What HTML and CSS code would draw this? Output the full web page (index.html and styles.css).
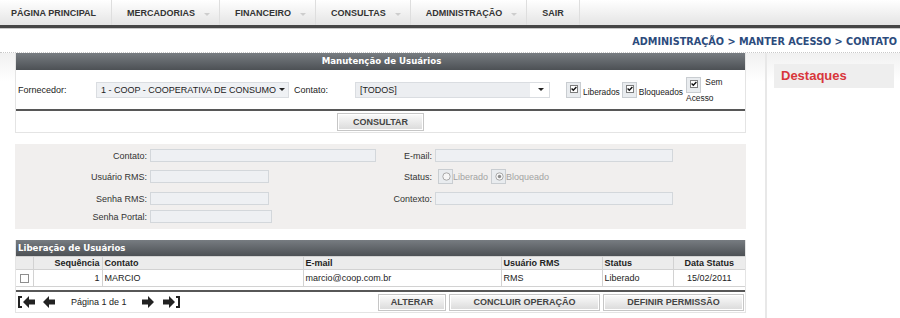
FILE: index.html
```html
<!DOCTYPE html>
<html lang="pt-BR">
<head>
  <meta charset="UTF-8">
  <title>Manter Acesso - Contato</title>
  <link rel="stylesheet" href="styles.css">
</head>
<body>

<!-- Menu -->
<nav class="menu">
  <ul>
    <li class="first">PÁGINA PRINCIPAL</li>
    <li>MERCADORIAS<span class="drop"></span></li>
    <li>FINANCEIRO<span class="drop"></span></li>
    <li>CONSULTAS<span class="drop"></span></li>
    <li>ADMINISTRAÇÃO<span class="drop"></span></li>
    <li class="last">SAIR</li>
  </ul>
</nav>

<div class="crumbs">ADMINISTRAÇÃO &gt; MANTER ACESSO &gt; CONTATO</div>

<div class="page">
  <main class="content">

    <!-- Filtro -->
    <section class="box">
      <h2 class="box-title center">Manutenção de Usuários</h2>
      <div class="filter-row">
        <span class="lbl-forn">Fornecedor:</span>
        <div class="select sel-forn">1 - COOP - COOPERATIVA DE CONSUMO<span class="arrow"></span></div>
        <span class="lbl-cont">Contato:</span>
        <div class="select sel-cont">[TODOS]<span class="arrow"></span></div>
        <div class="checks">
          <label class="check"><span class="cbox"><span class="tick"><svg width="6" height="6" viewBox="0 0 6 6"><path d="M0.6 2.6 L2.3 4.3 L5.4 1" fill="none" stroke="#111" stroke-width="1.4"/></svg></span></span>Liberados</label>
          <label class="check"><span class="cbox"><span class="tick"><svg width="6" height="6" viewBox="0 0 6 6"><path d="M0.6 2.6 L2.3 4.3 L5.4 1" fill="none" stroke="#111" stroke-width="1.4"/></svg></span></span>Bloqueados</label>
          <label class="check-wrap"><span class="cbox"><span class="tick"><svg width="6" height="6" viewBox="0 0 6 6"><path d="M0.6 2.6 L2.3 4.3 L5.4 1" fill="none" stroke="#111" stroke-width="1.4"/></svg></span></span> Sem Acesso</label>
        </div>
      </div>
      <div class="actions">
        <button class="btn btn-consultar">CONSULTAR</button>
      </div>
    </section>

    <!-- Dados do contato -->
    <section class="details">
      <span class="lbl">Contato:</span>
      <span class="field"></span>
      <span class="lbl">E-mail:</span>
      <span class="field"></span>

      <span class="lbl">Usuário RMS:</span>
      <span class="field w119"></span>
      <span class="lbl">Status:</span>
      <div class="radios">
        <span class="rbox"><svg width="9" height="9" viewBox="0 0 9 9"><circle cx="4.5" cy="4.5" r="3.7" fill="#f6f6f6" stroke="#a9a9a9"/></svg></span>Liberado
        <span class="rbox"><svg width="9" height="9" viewBox="0 0 9 9"><circle cx="4.5" cy="4.5" r="3.7" fill="#f6f6f6" stroke="#a9a9a9"/><circle cx="4.5" cy="4.5" r="1.7" fill="#8c8c8c"/></svg></span>Bloqueado
      </div>

      <span class="lbl">Senha RMS:</span>
      <span class="field w119"></span>
      <span class="lbl">Contexto:</span>
      <span class="field"></span>

      <span class="lbl">Senha Portal:</span>
      <span class="field w122"></span>
    </section>

    <!-- Lista -->
    <section class="box list">
      <h2 class="box-title">Liberação de Usuários</h2>
      <table class="grid">
        <colgroup>
          <col style="width:17px">
          <col style="width:69px">
          <col style="width:201px">
          <col style="width:198px">
          <col style="width:101px">
          <col style="width:71px">
          <col>
        </colgroup>
        <tr>
          <th></th>
          <th class="right">Sequência</th>
          <th>Contato</th>
          <th>E-mail</th>
          <th>Usuário RMS</th>
          <th>Status</th>
          <th class="center">Data Status</th>
        </tr>
        <tr>
          <td class="center"><span class="cb"></span></td>
          <td class="right">1</td>
          <td>MARCIO</td>
          <td>marcio@coop.com.br</td>
          <td>RMS</td>
          <td>Liberado</td>
          <td class="center">15/02/2011</td>
        </tr>
      </table>
      <div class="pager-row">
        <div class="pager">
          <svg class="ico-first" width="18" height="12" viewBox="0 0 18 12"><path d="M0 0h4v2H2v8h2v2H0z" fill="#222"/><path d="M5 6l6-6v3.5h6v5h-6V12z" fill="#222"/></svg>
          <svg class="ico-prev" width="12" height="12" viewBox="0 0 12 12"><path d="M0 6l6-6v3.5h6v5H6V12z" fill="#222"/></svg>
          <span class="pages">Página 1 de 1</span>
          <svg class="ico-next" width="12" height="12" viewBox="0 0 12 12"><path d="M12 6L6 0v3.5H0v5h6V12z" fill="#222"/></svg>
          <svg class="ico-last" width="18" height="12" viewBox="0 0 18 12"><path d="M13 6L7 0v3.5H1v5h6V12z" fill="#222"/><path d="M14 0h4v12h-4v-2h2V2h-2z" fill="#222"/></svg>
        </div>
        <div class="buttons">
          <button class="btn btn-alterar">ALTERAR</button>
          <button class="btn btn-concluir">CONCLUIR OPERAÇÃO</button>
          <button class="btn btn-definir">DEFINIR PERMISSÃO</button>
        </div>
      </div>
    </section>

  </main>

  <aside class="side">
    <h3>Destaques</h3>
  </aside>
</div>

</body>
</html>
```

FILE: styles.css
```css
* {
  box-sizing: border-box;
}

html, body {
  margin: 0;
  padding: 0;
  background: #fff;
  color: #333;
  font-family: "Liberation Sans", Arial, sans-serif;
  font-size: 9px;
}

/* Menu */
.menu {
  height: 28px;
  background: linear-gradient(#ffffff, #e4e4e4);
  border-bottom: 3px solid #454545;
  box-shadow: 0 1px 0 #c8c8c8;
}

.menu ul {
  list-style: none;
  margin: 0;
  padding: 0;
  display: flex;
  height: 25px;
}

.menu li {
  display: flex;
  align-items: center;
  padding: 0 9px 0 15px;
  border-right: 1px solid #dedede;
  font-weight: bold;
  color: #333;
}

.menu li.first {
  padding: 0 15px 0 11px;
}

.menu li.last {
  padding-right: 15px;
}

.menu .drop {
  width: 0;
  height: 0;
  margin: 4px 0 0 9px;
  border-left: 3px solid transparent;
  border-right: 3px solid transparent;
  border-top: 3px solid #cdcdcd;
}

.crumbs {
  height: 24px;
  padding: 2px 3px 0 0;
  text-align: right;
  font: bold 9.7px "DejaVu Sans", Verdana, sans-serif;
  line-height: 24px;
  color: #2c4b7c;
}

/* Page */
.page {
  display: flex;
  border-top: 1px dotted #c9c9c9;
  background: linear-gradient(#f1f1f1, #fff 28px) no-repeat;
  min-height: 266px;
}

.content {
  width: 765px;
  padding: 0 19px 0 15px;
}

.side {
  flex: 1;
  border-left: 2px solid #e8e8e8;
  padding: 11px 6px 0 7px;
}

.side h3 {
  margin: 0;
  height: 24px;
  line-height: 24px;
  padding-left: 7px;
  background: #eeeeee;
  color: #d8363b;
  font-size: 13px;
}

/* Boxes */
.box {
  background: #fff;
  border: 1px solid #e4e4e4;
  border-top: 0;
}

.box-title {
  margin: 0;
  height: 17px;
  padding-left: 2px;
  background: linear-gradient(#777c81, #4d5155);
  color: #fff;
  font: bold 8.6px "DejaVu Sans", Verdana, sans-serif;
  line-height: 17px;
}

.center {
  text-align: center;
}

.right {
  text-align: right;
}

.filter-row {
  height: 41px;
  display: flex;
  align-items: center;
  padding-left: 2px;
  border-bottom: 2px solid #575757;
  color: #222;
}

.lbl-forn {
  width: 78px;
}

.lbl-cont {
  width: 61px;
  margin-left: 5px;
}

.select {
  height: 16px;
  display: flex;
  align-items: center;
  justify-content: space-between;
  padding: 0 3px 0 4px;
  background: #eff1f4;
  border: 1px solid #dadde1;
  color: #222;
}

.sel-forn {
  width: 193px;
}

.sel-cont {
  width: 195px;
  padding-right: 5px;
  background: linear-gradient(90deg, #eceef1 90%, #fff 90%);
}

.select .arrow {
  width: 0;
  height: 0;
  border-left: 3px solid transparent;
  border-right: 3px solid transparent;
  border-top: 3px solid #222;
}

.checks {
  display: flex;
  align-items: center;
  margin-left: 16px;
  font-size: 8.4px;
}

.check {
  display: inline-flex;
  align-items: flex-end;
  line-height: 11px;
  margin-right: 2px;
}

.check-wrap {
  display: inline-block;
  width: 38px;
  line-height: 10px;
  margin-left: 1px;
}

.cbox {
  display: inline-block;
  width: 15px;
  height: 16px;
  padding: 2px 0 0 3px;
  margin-right: 2px;
  background: #e9ecef;
  border: 1px solid #c9cdd1;
  vertical-align: top;
}

.tick {
  display: flex;
  align-items: center;
  justify-content: center;
  width: 8px;
  height: 8px;
  background: #fff;
  border: 1px solid #7d7d7d;
}

.actions {
  height: 21px;
  display: flex;
  align-items: center;
  justify-content: center;
}

.btn {
  height: 18px;
  padding: 0;
  border: 1px solid #c6c6c6;
  background: linear-gradient(#fbfbfb, #dadada);
  box-shadow: inset 0 0 0 1px #fff;
  font: bold 9px "Liberation Sans", Arial, sans-serif;
  color: #444;
}

.btn-consultar {
  width: 87px;
}

/* Details */
.details {
  margin-top: 11px;
  height: 85px;
  padding-top: 2px;
  background: #f1efee;
  display: grid;
  grid-template-columns: 132px 226px 53px 238px;
  grid-template-rows: 19px 23px 21px 15px;
  column-gap: 3px;
  align-items: center;
}

.lbl {
  text-align: right;
  color: #333;
}

.field {
  height: 13px;
  background: #eef0f3;
  border: 1px solid #d3d7db;
}

.w119 {
  width: 119px;
}

.w122 {
  width: 122px;
}

.radios {
  display: flex;
  align-items: center;
  color: #a3a3a3;
}

.rbox {
  display: inline-block;
  width: 15px;
  height: 15px;
  padding: 2px 0 0 3px;
  margin-left: 3px;
  background: #e9ecef;
  border: 1px solid #c9cdd1;
}

/* List */
.list {
  margin-top: 11px;
}

.list .box-title {
  height: 16px;
  line-height: 16px;
}

.grid {
  width: 100%;
  border-collapse: collapse;
  table-layout: fixed;
}

.grid th, .grid td {
  border: 1px solid #d2d2d2;
  padding: 0 2px;
  text-align: left;
  white-space: nowrap;
  color: #222;
}

.grid th {
  height: 13px;
  background: #ececec;
  font-weight: bold;
}

.grid td {
  height: 17px;
}

.grid th.right, .grid td.right {
  text-align: right;
}

.grid th.center, .grid td.center {
  text-align: center;
}

.grid tr > :first-child {
  border-left: 0;
}

.grid tr > :last-child {
  border-right: 0;
}

.cb {
  display: inline-block;
  width: 9px;
  height: 9px;
  margin-top: 2px;
  background: #fff;
  border: 1px solid #8e8e8e;
}

.pager-row {
  margin-top: 3px;
  height: 22px;
  display: flex;
  align-items: center;
  justify-content: space-between;
  padding: 0 1px 0 2px;
  border-top: 2px solid #575757;
}

.pager {
  display: flex;
  align-items: center;
}

.ico-prev {
  margin-left: 7px;
}

.pages {
  margin: 0 15px 0 16px;
  color: #222;
}

.ico-last {
  margin-left: 8px;
}

.buttons {
  display: flex;
  gap: 3px;
}

.buttons .btn {
  height: 17px;
}

.btn-alterar {
  width: 68px;
}

.btn-concluir {
  width: 151px;
}

.btn-definir {
  width: 141px;
}
```
